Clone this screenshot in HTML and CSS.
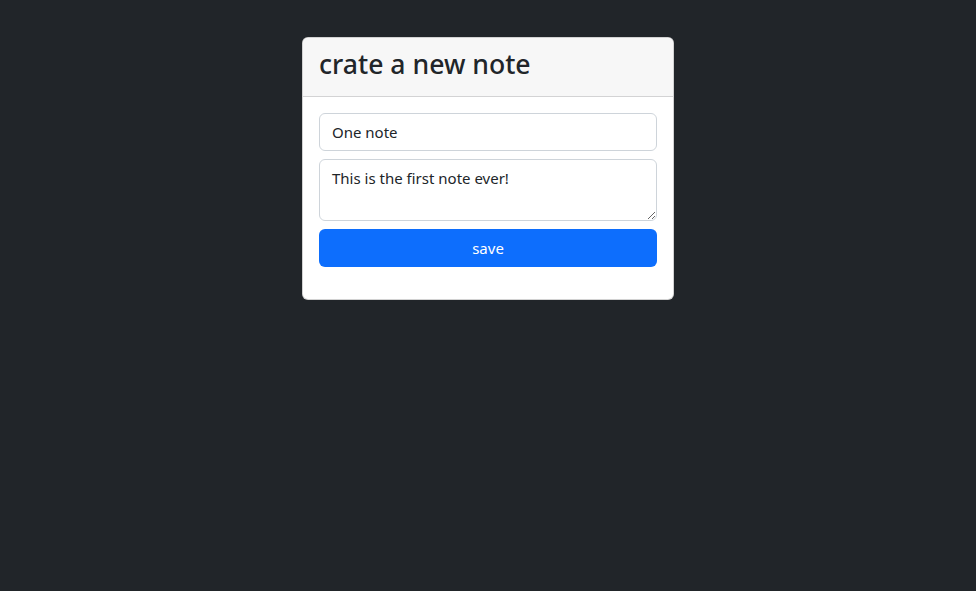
FILE: index.html
```html
<!DOCTYPE html>
<html lang="en">
<head>
<meta charset="utf-8">
<title>Notes</title>
<link rel="stylesheet" href="styles.css">
</head>
<body>
<main class="page">
  <section class="card">
    <header class="card-header">
      <h2 class="card-title">crate a new note</h2>
    </header>
    <div class="card-body">
      <form class="note-form">
        <input class="field" type="text" value="One note">
        <textarea class="field area" rows="2">This is the first note ever!</textarea>
        <button class="btn" type="button">save</button>
      </form>
    </div>
  </section>
</main>
</body>
</html>
```
FILE: styles.css
```css
* { box-sizing: border-box; }
html, body { margin: 0; height: 100%; }
body {
  background: #212529;
  font-family: "Noto Sans", "Open Sans", sans-serif;
  color: #212529;
}
.page {
  display: flex;
  justify-content: center;
  padding-top: 37px;
}
.card {
  width: 372px;
  background: #fff;
  border: 1px solid rgba(0,0,0,.175);
  border-radius: 6px;
  overflow: hidden;
}
.card-header {
  background: #f7f7f7;
  border-bottom: 1px solid #d3d3d4;
  padding: 8px 16px;
  height: 59px;
}
.card-title {
  margin: 0;
  font-size: 26.6px;
  font-weight: 500;
  line-height: 36px;
}
.card-body {
  padding: 16px 16px 32px;
}
.note-form {
  display: flex;
  flex-direction: column;
  gap: 8px;
}
.field {
  display: block;
  width: 100%;
  height: 38px;
  padding: 6px 12px;
  font-family: inherit;
  font-size: 15px;
  line-height: 24px;
  color: #212529;
  background: #fff;
  border: 1px solid #ced4da;
  border-radius: 6px;
}
.area {
  height: 62px;
  resize: vertical;
}
.btn {
  height: 38px;
  width: 100%;
  border: 0;
  border-radius: 6px;
  background: #0d6efd;
  color: #fff;
  font-family: inherit;
  font-size: 15px;
}
```
